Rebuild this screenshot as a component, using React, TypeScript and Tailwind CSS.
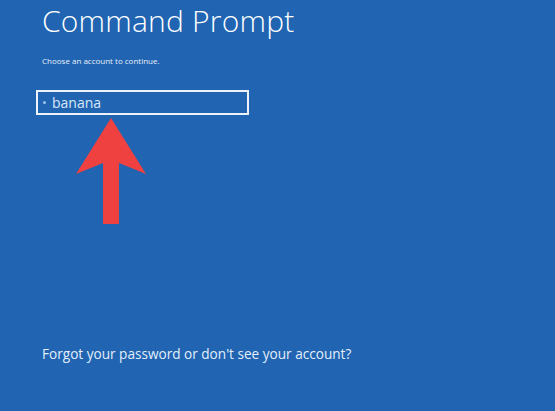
export default function App() {
  return (
    <div
      className="w-[555px] h-[411px] bg-[#2064b2] text-white overflow-hidden flex flex-col pl-[42px]"
      style={{ fontFamily: '"Open Sans", "Noto Sans", sans-serif' }}
    >
      <h1 className="text-[30px] font-light leading-[41px] tracking-[0.2px]">Command Prompt</h1>
      <p className="text-[8px] leading-[10px] mt-[15px] text-[#e8f0fa]">Choose an account to continue.</p>

      <div className="relative mt-[24px] -ml-[6px] w-[213px] h-[25px] border-2 border-[#eef3fa] flex items-center pl-[5px]">
        <span className="w-[3px] h-[3px] rounded-full bg-[#9cc4ee] mr-[6px]" />
        <span className="text-[14px] leading-[18px] text-[#dbe8f7]">banana</span>

        <svg
          className="absolute left-[38px] top-[24px]"
          width="72"
          height="110"
          viewBox="0 0 72 110"
        >
          <polygon points="35,2 70,58 43,47 43,108 27,108 27,47 0,58" fill="#f04141" />
        </svg>
      </div>

      <div className="flex-1" />
      <p className="text-[13.6px] leading-[20px] mb-[47px] text-[#e4eefa]">
        Forgot your password or don't see your account?
      </p>
    </div>
  )
}
